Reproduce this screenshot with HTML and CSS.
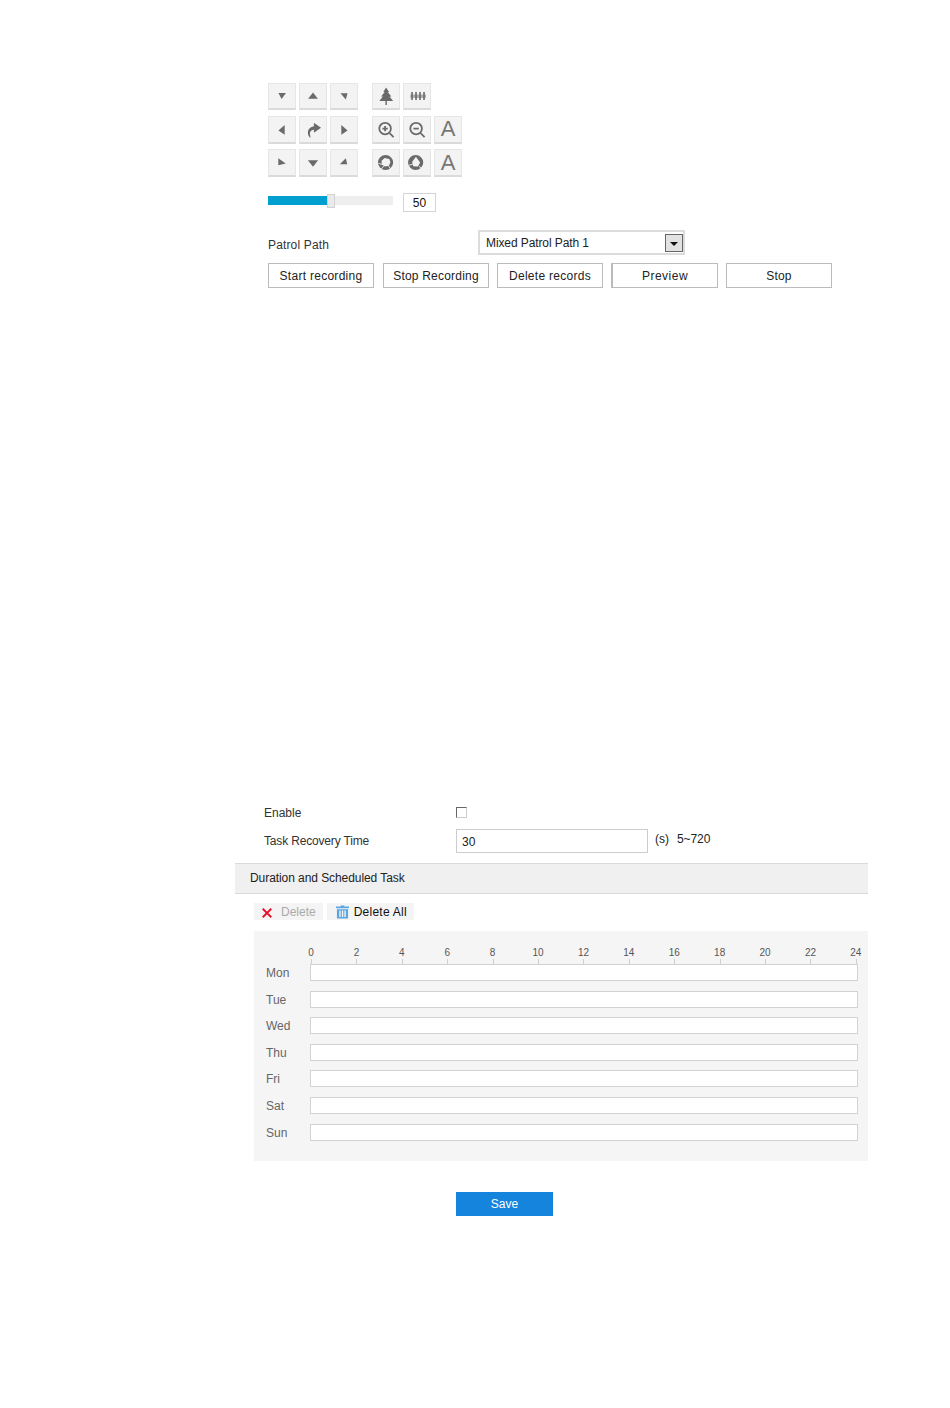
FILE: index.html
```html
<!DOCTYPE html>
<html lang="en">
<head>
<meta charset="utf-8">
<title>Patrol Path</title>
<link rel="stylesheet" href="styles.css">
</head>
<body>
<main class="page">
  <section class="ptz">
    <div class="pads">
      <div class="pad pad-dir">
        <span class="key"><svg viewBox="0 0 28 27" class="ico"><path d="M10 10h8.500L13.500 17z"/></svg></span>
        <span class="key"><svg viewBox="0 0 28 27" class="ico"><path d="M8.500 16.500 14 9.500l5.500 7z"/></svg></span>
        <span class="key"><svg viewBox="0 0 28 27" class="ico"><path d="M10 10.500h8L16 17.500z"/></svg></span>
        <span class="key"><svg viewBox="0 0 28 28" class="ico"><path d="M17 9v11l-7-5z"/></svg></span>
        <span class="key"><svg viewBox="0 0 28 28" class="ico"><path d="M15 6.500 23 12l-8 5.500v-3.200c-2.500.2-4 1.700-4.500 3.700l.7 5.500C7 20.500 6.500 11.500 15 10.300z"/></svg></span>
        <span class="key"><svg viewBox="0 0 28 28" class="ico"><path d="M11 9v11l7-5z"/></svg></span>
        <span class="key"><svg viewBox="0 0 28 27" class="ico"><path d="M10 9v7.500l8-1.800z"/></svg></span>
        <span class="key"><svg viewBox="0 0 28 27" class="ico"><path d="M8.500 11h11L14 18z"/></svg></span>
        <span class="key"><svg viewBox="0 0 28 27" class="ico"><path d="M9.500 15.500h8L16 9z"/></svg></span>
      </div>
      <div class="pad pad-fn">
        <span class="key"><svg viewBox="0 0 28 27" class="ico"><path d="M14 4l3.500 5h-1.500l4 5h-2l4 5h-7v4.500h-1.600V19H6.500l4-5h-2l4-5H11z"/></svg></span>
        <span class="key"><svg viewBox="0 0 28 27" class="ico"><path d="M7.500 9h1.800v9H7.500zM12 9h1.800v9H12zM16.500 9h1.800v9h-1.800zM21 9h1.800v9H21zM6.500 12h17.500v1H6.500zM6.500 14.200h17.500v1H6.500z"/></svg></span>
        <span class="key empty-slot"></span>
        <span class="key"><svg viewBox="0 0 28 28" class="ico ico-line"><circle cx="13" cy="13" r="6.500"/><path d="M18 18l4.500 4.500M10 13h6M13 10v6"/></svg></span>
        <span class="key"><svg viewBox="0 0 28 28" class="ico ico-line"><circle cx="13" cy="13" r="6.500"/><path d="M18 18l4.500 4.500M10 13h6"/></svg></span>
        <span class="key key-a">A</span>
        <span class="key"><svg viewBox="0 0 28 28" class="ico"><path fill-rule="evenodd" d="M13.500 5.500a8.500 8.500 0 1 1 0 17 8.500 8.500 0 0 1 0-17zM12.500 9 9 12l.3 4.500 3.700 2 4.200-1 1.800-3.800-1.300-3.700z"/><path class="iris-cut" d="M5.500 15l4 1M8.500 21.500l3-3.500M18.500 20.500l-2-3.500"/></svg></span>
        <span class="key"><svg viewBox="0 0 28 28" class="ico"><path fill-rule="evenodd" d="M12.500 5.500a8.500 8.500 0 1 1 0 17 8.500 8.500 0 0 1 0-17zM12.800 7.500 8.500 13.500l1.200 4.800 5.300.3 2.500-4.600z"/><path class="iris-cut" d="M5 17l4-1M19 20.500l-3-2.500"/></svg></span>
        <span class="key key-a">A</span>
      </div>
    </div>
    <div class="speed">
      <div class="track"><div class="fill"></div><span class="thumb"></span></div>
      <span class="speed-val">50</span>
    </div>
    <div class="patrol">
      <label class="patrol-label">Patrol Path</label>
      <div class="select">
        <span>Mixed Patrol Path 1</span>
        <span class="select-arrow"></span>
      </div>
    </div>
    <div class="actions">
      <button class="btn btn-wide" type="button">Start recording</button>
      <button class="btn btn-second" type="button">Stop Recording</button>
      <button class="btn btn-wide" type="button">Delete records</button>
      <button class="btn btn-preview" type="button">Preview</button>
      <button class="btn" type="button">Stop</button>
    </div>
  </section>

  <section class="task">
    <div class="field field-enable">
      <span class="field-label">Enable</span>
      <span class="check"></span>
    </div>
    <div class="field field-time">
      <span class="field-label field-label-tight">Task Recovery Time</span>
      <div class="text-input">30</div>
      <span class="unit">(s)</span>
      <span class="range">5~720</span>
    </div>
    <h2 class="band">Duration and Scheduled Task</h2>
    <div class="tools">
      <span class="tool">
        <svg viewBox="0 0 14 14" class="tool-x"><path d="M2 2l10 10M12 2L2 12"/></svg>
        <span class="tool-off">Delete</span>
      </span>
      <span class="tool">
        <svg viewBox="0 0 14 14" class="tool-bin"><path d="M5 0h4v1h5v2H0V1h5zM1 4h12v10H1zM3.500 5.500v7h1.500v-7zM6.300 5.500v7h1.500v-7zM9 5.500v7h1.500v-7z" fill-rule="evenodd"/></svg>
        <span class="tool-all">Delete All</span>
      </span>
    </div>
    <div class="schedule">
      <div class="scale">
        <span>0</span><span>2</span><span>4</span><span>6</span><span>8</span><span>10</span><span>12</span><span>14</span><span>16</span><span>18</span><span>20</span><span>22</span><span>24</span>
      </div>
      <div class="days">
        <div class="day"><span>Mon</span><div class="bar"></div></div>
        <div class="day"><span>Tue</span><div class="bar"></div></div>
        <div class="day"><span>Wed</span><div class="bar"></div></div>
        <div class="day"><span>Thu</span><div class="bar"></div></div>
        <div class="day"><span>Fri</span><div class="bar"></div></div>
        <div class="day"><span>Sat</span><div class="bar"></div></div>
        <div class="day"><span>Sun</span><div class="bar"></div></div>
      </div>
    </div>
    <div class="save-row"><button class="save" type="button">Save</button></div>
  </section>
</main>
</body>
</html>
```

FILE: styles.css
```css
* { box-sizing: border-box; }
html, body { margin: 0; padding: 0; background: #fff; }
body {
  font-family: "Liberation Sans", Arial, sans-serif;
  font-size: 12px;
  color: #222;
  height: 1408px;
  overflow: hidden;
}
.page { padding-top: 83px; }

/* PTZ */
.ptz { margin-left: 268px; width: 564px; }
.pads { display: flex; gap: 14px; }
.pad {
  display: grid;
  grid-template-columns: repeat(3, 28px);
  grid-template-rows: 27px 28px 28px;
  column-gap: 3px;
  row-gap: 5.500px;
}
.key {
  display: flex;
  align-items: center;
  justify-content: center;
  background: #f3f3f3;
  border: 1px solid #e6e6e6;
  border-bottom: 2px solid #dadada;
}
.empty-slot { visibility: hidden; }
.ico { width: 100%; height: 100%; display: block; fill: #6a6a6a; }
.ico-line { fill: none; stroke: #6a6a6a; stroke-width: 2; }
.iris-cut { fill: none; stroke: #f3f3f3; stroke-width: 1; }
.key-a { font-size: 22px; line-height: 1; color: #777; }

.speed { display: flex; align-items: flex-start; margin-top: 16px; }
.track {
  position: relative;
  width: 125px;
  height: 9px;
  margin-top: 3px;
  background: #eee;
}
.fill { width: 59px; height: 9px; background: #009fcf; }
.thumb {
  position: absolute;
  left: 59px;
  top: -2px;
  width: 8px;
  height: 14px;
  background: #eaeaea;
  border: 1px solid #d2d2d2;
}
.speed-val {
  width: 33px;
  height: 19px;
  margin-left: 10px;
  border: 1px solid #d4d4d4;
  text-align: center;
  line-height: 18px;
  color: #111;
}

.patrol { display: flex; align-items: flex-end; margin-top: 18px; height: 25px; }
.patrol-label { width: 210px; padding-bottom: 3px; color: #333; letter-spacing: 0.15px; }
.select {
  width: 207px;
  height: 25px;
  display: flex;
  align-items: center;
  justify-content: space-between;
  padding: 0 0 0 6px;
  border: 2px solid #dcdcdc;
  background: #fff;
  color: #222;
  letter-spacing: -0.1px;
}
.select-arrow {
  position: relative;
  width: 18px;
  height: 18px;
  border: 1px solid #666;
  background: #e2e2e2;
}
.select-arrow::after {
  content: "";
  position: absolute;
  left: 4px;
  top: 7px;
  border-left: 4px solid transparent;
  border-right: 4px solid transparent;
  border-top: 4px solid #111;
}

.actions { display: flex; gap: 8px; margin-top: 8px; }
.btn {
  width: 106px;
  height: 25px;
  padding: 0;
  border: 1px solid #bbb;
  background: #fff;
  font: inherit;
  color: #222;
  letter-spacing: 0.2px;
}
.btn-second { margin-left: 1px; }
.btn-wide { letter-spacing: 0.28px; }
.btn-preview { width: 107px; border-left-width: 2px; letter-spacing: 0.5px; }

/* Task */
.task { margin-top: 519px; margin-left: 235px; width: 633px; }
.field { display: flex; margin-left: 29px; color: #333; }
.field-label { width: 192px; }
.field-label-tight { letter-spacing: -0.17px; }
.field-enable { align-items: center; height: 12px; }
.check {
  width: 11px;
  height: 11px;
  margin-top: -2px;
  border: 1px solid #ccc;
  border-top-color: #666;
  border-left-color: #666;
  background: #fff;
}
.field-time { align-items: center; margin-top: 10px; height: 24px; }
.text-input {
  width: 192px;
  height: 24px;
  padding-left: 5px;
  border: 1px solid #ccc;
  line-height: 24px;
  color: #222;
}
.unit { margin-left: 7px; margin-top: -4px; color: #222; }
.range { margin-left: 8px; margin-top: -4px; color: #222; letter-spacing: -0.1px; }
.band {
  margin: 10px 0 0;
  height: 31px;
  padding-left: 15px;
  background: #f0f0f0;
  border-top: 1px solid #dadada;
  border-bottom: 1px solid #dadada;
  font-size: 12px;
  font-weight: 400;
  letter-spacing: -0.07px;
  line-height: 28px;
  color: #222;
}
.tools { display: flex; gap: 4px; margin: 9px 0 0 19px; height: 17px; }
.tool {
  display: flex;
  align-items: center;
  padding: 0 7px;
  background: #f4f4f4;
  color: #222;
}
.tool-x { width: 12px; height: 12px; margin: 2px 8px 0 0; fill: none; stroke: #e8112d; stroke-width: 2.200; flex: none; }
.tool-bin { width: 13px; height: 14px; margin: 0 5px 0 2px; fill: #5aa5e2; flex: none; }
.tool-off { color: #aaa; }
.tool-all { letter-spacing: 0.25px; color: #111; }

.schedule {
  margin: 11px 0 0 19px;
  height: 230px;
  padding: 15px 10px 0 12px;
  background: #f5f5f5;
  color: #666;
}
.scale {
  display: flex;
  justify-content: space-between;
  margin-left: 35px;
  margin-right: -8px;
  height: 18px;
  font-size: 10px;
  color: #555;
}
.scale span {
  position: relative;
  width: 20px;
  text-align: center;
  line-height: 13px;
}
.scale span::after {
  content: "";
  position: absolute;
  left: 10px;
  top: 13px;
  width: 1px;
  height: 5px;
  background: #d0d0d0;
}
.days { display: flex; flex-direction: column; gap: 9.600px; }
.day { display: flex; align-items: center; height: 17px; }
.day span { width: 44px; line-height: 17px; margin-top: 2px; }
.bar { flex: 1; height: 17px; background: #fff; border: 1px solid #d2d2d2; }

.save-row { margin: 31px 0 0 221px; }
.save {
  display: block;
  width: 97px;
  height: 24px;
  padding: 0;
  border: 0;
  background: #1584dc;
  color: #fff;
  font: inherit;
}
```
